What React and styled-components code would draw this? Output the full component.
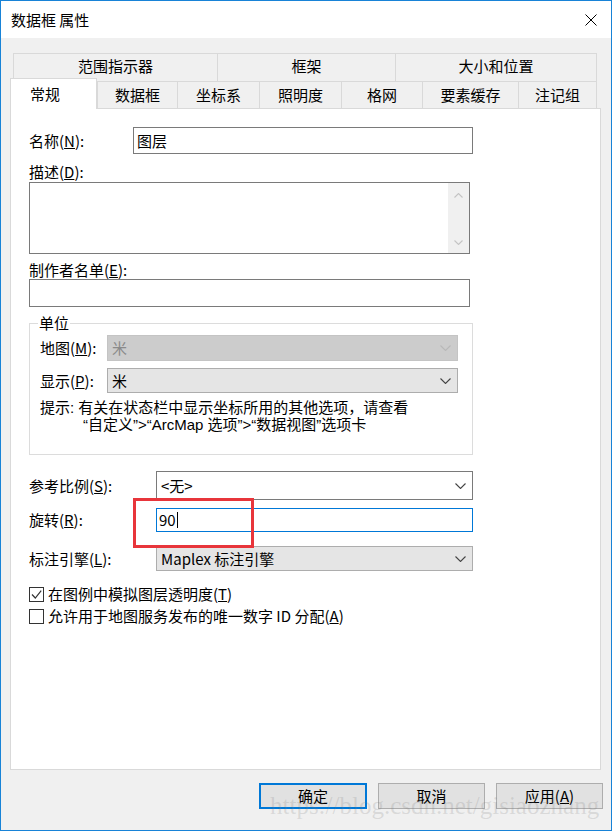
import React from "react";
import styled, { createGlobalStyle, css } from "styled-components";

const GlobalStyle = createGlobalStyle`
  html, body { margin: 0; padding: 0; background: #ffffff; }
  body { font-family: "Noto Sans CJK SC", "Noto Sans", sans-serif; color: #000; }
  * { box-sizing: border-box; }
`;

const Window = styled.div`
  position: relative;
  width: 612px;
  height: 831px;
  border: 1px solid #1883d7;
  background: #f0f0f0;
  display: flex;
  flex-direction: column;
  overflow: hidden;
  font-size: 15px;
`;

const TitleBar = styled.div`
  height: 37px;
  flex: none;
  background: #ffffff;
  display: flex;
  align-items: center;
  justify-content: space-between;
  padding: 0 14px 0 10px;
`;

const Title = styled.span`
  font-size: 15px;
  line-height: 18px;
`;

const CloseIcon = styled.svg`
  width: 12px;
  height: 12px;
  display: block;
`;

const Body = styled.div`
  flex: 1;
  display: flex;
  flex-direction: column;
  padding: 15px 10px 0 9px;
`;

const TabRow = styled.div`
  display: flex;
  flex: none;
  ${(p) =>
    p.$top
      ? css`
          height: 28px;
          margin: 0 3px;
        `
      : css`
          height: 27px;
          align-items: flex-end;
        `}
`;

const Tab = styled.div`
  width: ${(p) => p.$w}px;
  height: 100%;
  flex: none;
  background: #f0f0f0;
  border-top: 1px solid #d9d9d9;
  border-left: 1px solid #d9d9d9;
  display: flex;
  align-items: center;
  justify-content: center;
  line-height: 18px;
  padding-bottom: ${(p) => (p.$top ? 3 : 0)}px;
  &:last-child {
    border-right: 1px solid #d9d9d9;
  }
`;

const ActiveTab = styled.div`
  position: relative;
  z-index: 2;
  width: ${(p) => p.$w}px;
  height: 31px;
  margin-bottom: -1px;
  flex: none;
  background: #ffffff;
  border: 1px solid #d9d9d9;
  border-bottom: none;
  display: flex;
  align-items: center;
  padding: 0 0 1px 19px;
  line-height: 18px;
`;

const Panel = styled.div`
  position: relative;
  z-index: 1;
  height: 662px;
  flex: none;
  background: #ffffff;
  border: 1px solid #d9d9d9;
  display: flex;
  flex-direction: column;
  padding-left: 18px;
`;

const FormRow = styled.div`
  display: flex;
  align-items: center;
  flex: none;
  margin-top: ${(p) => p.$mt || 0}px;
`;

const Label = styled.div`
  flex: none;
  width: ${(p) => (p.$w ? `${p.$w}px` : "auto")};
  line-height: 18px;
  margin-top: ${(p) => p.$mt || 0}px;
  white-space: nowrap;
`;

const TextBox = styled.div`
  flex: none;
  width: ${(p) => p.$w}px;
  height: ${(p) => p.$h}px;
  margin-top: ${(p) => p.$mt || 0}px;
  background: #ffffff;
  border: 1px solid ${(p) => (p.$focused ? "#0078d7" : "#7a7a7a")};
  display: flex;
  align-items: center;
  padding-left: ${(p) => p.$pl ?? 3}px;
  line-height: 18px;
`;

const Caret = styled.span`
  display: inline-block;
  width: 1px;
  height: 16px;
  background: #000;
  margin-left: 1px;
`;

const TextArea = styled.div`
  flex: none;
  width: ${(p) => p.$w}px;
  height: ${(p) => p.$h}px;
  margin-top: ${(p) => p.$mt || 0}px;
  background: #ffffff;
  border: 1px solid #7a7a7a;
  display: flex;
  justify-content: flex-end;
`;

const ScrollTrack = styled.div`
  width: 21px;
  background: #f0f0f0;
  display: flex;
  flex-direction: column;
  align-items: center;
  justify-content: space-between;
  padding: 10px 0 8px;
  color: #c2c2c2;
`;

const Combo = styled.div`
  flex: none;
  width: ${(p) => p.$w}px;
  height: ${(p) => p.$h}px;
  display: flex;
  align-items: center;
  justify-content: space-between;
  padding: 0 6px 0 4px;
  line-height: 18px;
  ${(p) =>
    p.$variant === "disabled"
      ? css`
          background: #cccccc;
          border: 1px solid #c4c4c4;
          color: #8a8a8a;
        `
      : p.$variant === "readonly"
      ? css`
          background: #e5e5e5;
          border: 1px solid #adadad;
          color: #000;
        `
      : css`
          background: #ffffff;
          border: 1px solid #7a7a7a;
          color: #000;
        `}
`;

const ChevronSvg = styled.svg`
  display: block;
  flex: none;
  color: ${(p) => p.$color || "#444444"};
`;

const Group = styled.fieldset`
  flex: none;
  width: 444px;
  margin: 7px 0 0 0;
  padding: 3px 0 21px 10px;
  border: 1px solid #dcdcdc;
  min-width: 0;
`;

const Legend = styled.legend`
  padding: 0 1px;
  margin-left: -2px;
  line-height: 18px;
  font-size: 15px;
`;

const Hint = styled.div`
  font-family: "Liberation Sans", "Noto Sans CJK SC", sans-serif;
  line-height: 17px;
  margin-top: ${(p) => p.$mt || 0}px;
  padding-left: ${(p) => p.$indent || 0}px;
  white-space: nowrap;
`;

const CheckRow = styled.div`
  display: flex;
  align-items: center;
  height: 18px;
  gap: 4px;
  margin-top: ${(p) => p.$mt || 0}px;
  line-height: 18px;
  white-space: nowrap;
`;

const CheckBox = styled.div`
  width: 15px;
  height: 15px;
  flex: none;
  border: 1px solid #333333;
  background: #ffffff;
  position: relative;
`;

const CheckSvg = styled.svg`
  position: absolute;
  left: -1px;
  top: -1px;
`;

const Annotation = styled.div`
  position: absolute;
  left: 122px;
  top: 389px;
  width: 121px;
  height: 50px;
  border: 3px solid #e8353b;
  pointer-events: none;
`;

const ButtonRow = styled.div`
  display: flex;
  justify-content: flex-end;
  gap: 11px;
  margin: 13px -2px 0 0;
`;

const Button = styled.div`
  width: ${(p) => p.$w}px;
  height: 26px;
  background: #e1e1e1;
  border: ${(p) => (p.$primary ? "2px solid #0078d7" : "1px solid #adadad")};
  display: flex;
  align-items: center;
  justify-content: center;
  line-height: 18px;
`;

const Watermark = styled.div`
  position: absolute;
  left: 269px;
  top: 791px;
  font-family: "Liberation Serif", serif;
  font-size: 25px;
  line-height: 28px;
  color: rgba(120, 120, 120, 0.2);
  white-space: nowrap;
  pointer-events: none;
`;

const Chevron = ({ color, w = 11, h = 6, up }) => (
  <ChevronSvg $color={color} width={w} height={h} viewBox={`0 0 ${w} ${h}`}>
    <polyline
      points={
        up
          ? `0.5,${h - 0.5} ${w / 2},0.5 ${w - 0.5},${h - 0.5}`
          : `0.5,0.5 ${w / 2},${h - 0.5} ${w - 0.5},0.5`
      }
      fill="none"
      stroke="currentColor"
      strokeWidth="1.1"
    />
  </ChevronSvg>
);

const Check = ({ checked, children }) => (
  <>
    <CheckBox>
      {checked && (
        <CheckSvg width="15" height="15" viewBox="0 0 15 15">
          <polyline
            points="3,7.5 6.3,11 12.2,3.6"
            fill="none"
            stroke="#333333"
            strokeWidth="1.2"
          />
        </CheckSvg>
      )}
    </CheckBox>
    <span>{children}</span>
  </>
);

const topTabs = [
  { label: "范围指示器", w: 204 },
  { label: "框架", w: 178 },
  { label: "大小和位置", w: 202 },
];

const bottomTabs = [
  { label: "数据框", w: 80 },
  { label: "坐标系", w: 82 },
  { label: "照明度", w: 82 },
  { label: "格网", w: 81 },
  { label: "要素缓存", w: 96 },
  { label: "注记组", w: 79 },
];

export default function App() {
  return (
    <>
      <GlobalStyle />
      <Window>
        <TitleBar>
          <Title>数据框 属性</Title>
          <CloseIcon viewBox="0 0 12 12">
            <path d="M0.5 0.5 L11.5 11.5 M11.5 0.5 L0.5 11.5" stroke="#000" strokeWidth="1" fill="none" />
          </CloseIcon>
        </TitleBar>
        <Body>
          <TabRow $top>
            {topTabs.map((t) => (
              <Tab key={t.label} $w={t.w} $top>
                {t.label}
              </Tab>
            ))}
          </TabRow>
          <TabRow>
            <ActiveTab $w={87}>常规</ActiveTab>
            {bottomTabs.map((t) => (
              <Tab key={t.label} $w={t.w}>
                {t.label}
              </Tab>
            ))}
          </TabRow>
          <Panel>
            <FormRow $mt={18}>
              <Label $w={104}>
                名称(<u>N</u>):
              </Label>
              <TextBox $w={340} $h={27}>图层</TextBox>
            </FormRow>
            <Label $mt={9}>
              描述(<u>D</u>):
            </Label>
            <TextArea $w={441} $h={72} $mt={1}>
              <ScrollTrack>
                <Chevron up color="#c4c4c4" w={9} h={5} />
                <Chevron color="#c4c4c4" w={9} h={5} />
              </ScrollTrack>
            </TextArea>
            <Label $mt={7}>
              制作者名单(<u>E</u>):
            </Label>
            <TextBox $w={441} $h={28} />
            <Group>
              <Legend>单位</Legend>
              <FormRow>
                <Label $w={67}>
                  地图(<u>M</u>):
                </Label>
                <Combo $w={351} $h={26} $variant="disabled">
                  <span>米</span>
                  <Chevron color="#b8b8b8" />
                </Combo>
              </FormRow>
              <FormRow $mt={7}>
                <Label $w={67}>
                  显示(<u>P</u>):
                </Label>
                <Combo $w={351} $h={25} $variant="readonly">
                  <span>米</span>
                  <Chevron />
                </Combo>
              </FormRow>
              <Hint $mt={6}>提示: 有关在状态栏中显示坐标所用的其他选项，请查看</Hint>
              <Hint $indent={43}>“自定义”&gt;“ArcMap 选项”&gt;“数据视图”选项卡</Hint>
            </Group>
            <FormRow $mt={16}>
              <Label $w={127}>
                参考比例(<u>S</u>):
              </Label>
              <Combo $w={317} $h={29}>
                <span>&lt;无&gt;</span>
                <Chevron />
              </Combo>
            </FormRow>
            <FormRow $mt={8}>
              <Label $w={127}>
                旋转(<u>R</u>):
              </Label>
              <TextBox $w={317} $h={24} $focused $pl={2}>
                90
                <Caret />
              </TextBox>
            </FormRow>
            <FormRow $mt={14}>
              <Label $w={127}>
                标注引擎(<u>L</u>):
              </Label>
              <Combo $w={317} $h={25} $variant="readonly">
                <span>Maplex 标注引擎</span>
                <Chevron />
              </Combo>
            </FormRow>
            <CheckRow $mt={14}>
              <Check checked>
                在图例中模拟图层透明度(<u>T</u>)
              </Check>
            </CheckRow>
            <CheckRow $mt={4}>
              <Check>
                允许用于地图服务发布的唯一数字 ID 分配(<u>A</u>)
              </Check>
            </CheckRow>
            <Annotation />
          </Panel>
          <ButtonRow>
            <Button $w={108} $primary>
              确定
            </Button>
            <Button $w={107}>取消</Button>
            <Button $w={107}>
              应用(<u>A</u>)
            </Button>
          </ButtonRow>
        </Body>
        <Watermark>https://blog.csdn.net/gisiaozhang</Watermark>
      </Window>
    </>
  );
}
